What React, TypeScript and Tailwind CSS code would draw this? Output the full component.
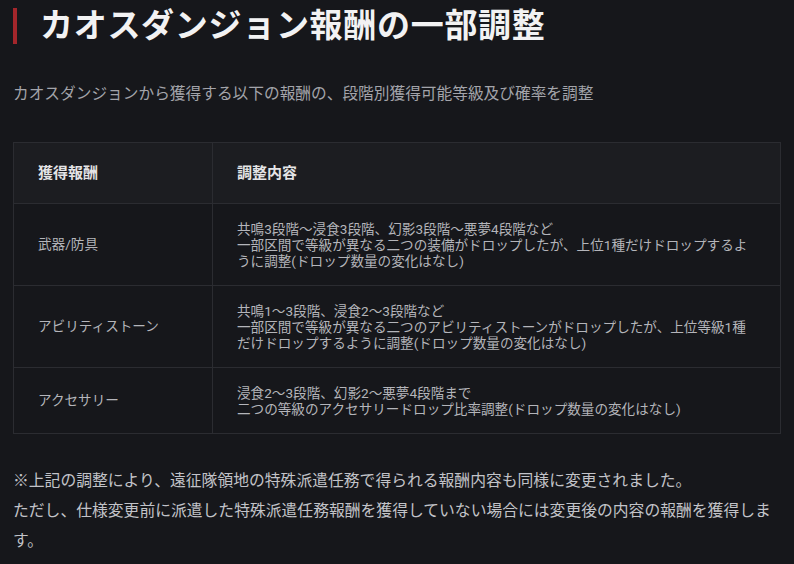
import React from "react";

const font = { fontFamily: 'Roboto, "Noto Sans CJK JP", "Noto Sans", sans-serif' };

function Row({
  label,
  lines,
  h,
  last,
}: {
  label: string;
  lines: string[];
  h: string;
  last?: boolean;
}) {
  return (
    <div className={`flex ${last ? "" : "border-b border-[#2b2c31]"}`}>
      <div className={`w-[199px] shrink-0 border-r border-[#2b2c31] flex items-center pl-[24px] text-[13.6px] text-[#b4b5ba] ${h}`}>
        {label}
      </div>
      <div className={`flex-1 flex flex-col justify-center pl-[24px] text-[13.6px] leading-[16px] text-[#b4b5ba] ${h}`}>
        {lines.map((l, i) => (
          <span key={i} className="whitespace-nowrap">
            {l}
          </span>
        ))}
      </div>
    </div>
  );
}

export default function App() {
  return (
    <div className="w-[794px] h-[564px] overflow-hidden bg-[#16171b] px-[13px] pt-[8px]" style={font}>
      <div className="flex items-center h-[36px]">
        <div className="w-[4px] h-[36px] bg-[#a3262b]" />
        <h1 className="ml-[23px] text-[33px] leading-[40px] font-bold tracking-[0.7px] text-[#f2f2f3] whitespace-nowrap">
          カオスダンジョン報酬の一部調整
        </h1>
      </div>

      <p className="mt-[38px] text-[15.7px] leading-[24px] text-[#a3a4aa] whitespace-nowrap">
        カオスダンジョンから獲得する以下の報酬の、段階別獲得可能等級及び確率を調整
      </p>

      <div className="mt-[36px] w-[768px] border border-[#2b2c31]">
        <div className="flex border-b border-[#2b2c31] bg-[#1c1d21]">
          <div className="w-[199px] shrink-0 h-[60px] border-r border-[#2b2c31] flex items-center pl-[24px] text-[15px] font-bold text-[#e4e4e6]">
            獲得報酬
          </div>
          <div className="flex-1 h-[60px] flex items-center pl-[24px] text-[15px] font-bold text-[#e4e4e6]">
            調整内容
          </div>
        </div>
        <Row
          label="武器/防具"
          h="h-[81px]"
          lines={[
            "共鳴3段階〜浸食3段階、幻影3段階〜悪夢4段階など",
            "一部区間で等級が異なる二つの装備がドロップしたが、上位1種だけドロップするよ",
            "うに調整(ドロップ数量の変化はなし)",
          ]}
        />
        <Row
          label="アビリティストーン"
          h="h-[81px]"
          lines={[
            "共鳴1〜3段階、浸食2〜3段階など",
            "一部区間で等級が異なる二つのアビリティストーンがドロップしたが、上位等級1種",
            "だけドロップするように調整(ドロップ数量の変化はなし)",
          ]}
        />
        <Row
          label="アクセサリー"
          h="h-[65px]"
          last
          lines={[
            "浸食2〜3段階、幻影2〜悪夢4段階まで",
            "二つの等級のアクセサリードロップ比率調整(ドロップ数量の変化はなし)",
          ]}
        />
      </div>

      <div className="mt-[32px] text-[15.8px] leading-[30px] text-[#c2c3c8]">
        <p className="whitespace-nowrap">
          ※上記の調整により、遠征隊領地の特殊派遣任務で得られる報酬内容も同様に変更されました。
        </p>
        <p className="whitespace-nowrap">
          ただし、仕様変更前に派遣した特殊派遣任務報酬を獲得していない場合には変更後の内容の報酬を獲得しま
        </p>
        <p className="whitespace-nowrap">す。</p>
      </div>
    </div>
  );
}
